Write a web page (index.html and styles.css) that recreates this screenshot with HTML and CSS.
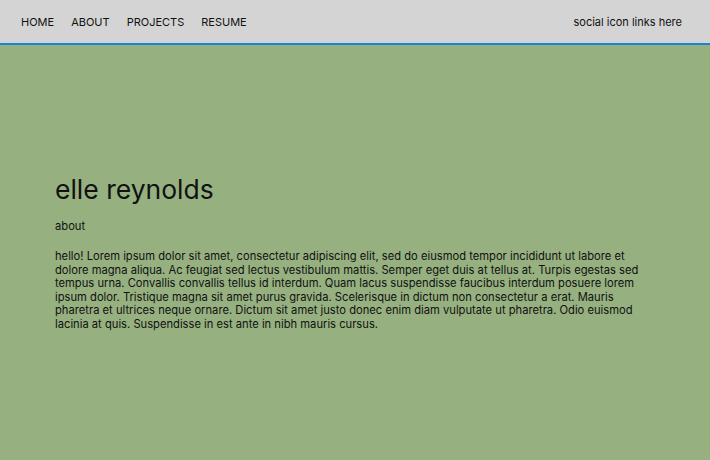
FILE: index.html
```html
<!DOCTYPE html>
<html lang="en">
<head>
<meta charset="utf-8">
<title>elle reynolds</title>
<link rel="stylesheet" href="styles.css">
</head>
<body>
<header class="nav">
  <nav class="nav-links">
    <a href="#" class="nav-link">HOME</a>
    <a href="#" class="nav-link">ABOUT</a>
    <a href="#" class="nav-link">PROJECTS</a>
    <a href="#" class="nav-link">RESUME</a>
  </nav>
  <div class="social">social icon links here</div>
</header>
<main class="content">
  <h1 class="title">elle reynolds</h1>
  <h2 class="subtitle">about</h2>
  <p class="text">hello! Lorem ipsum dolor sit amet, consectetur adipiscing elit, sed do eiusmod tempor incididunt ut labore et dolore magna aliqua. Ac feugiat sed lectus vestibulum mattis. Semper eget duis at tellus at. Turpis egestas sed tempus urna. Convallis convallis tellus id interdum. Quam lacus suspendisse faucibus interdum posuere lorem ipsum dolor. Tristique magna sit amet purus gravida. Scelerisque in dictum non consectetur a erat. Mauris pharetra et ultrices neque ornare. Dictum sit amet justo donec enim diam vulputate ut pharetra. Odio euismod lacinia at quis. Suspendisse in est ante in nibh mauris cursus.</p>
</main>
</body>
</html>
```

FILE: styles.css
```css
html, body {
  margin: 0;
  padding: 0;
  height: 100%;
}
body {
  background: #96b080;
  font-family: Inter, "Noto Sans", sans-serif;
  color: #111;
}
.nav {
  display: flex;
  justify-content: space-between;
  align-items: center;
  height: 43px;
  background: #d4d4d4;
  border-bottom: 2px solid #1a84d8;
  padding: 0 28px 0 21px;
  font-size: 11px;
}
.nav-links {
  display: flex;
  gap: 17px;
}
.nav-link {
  color: #111;
  text-decoration: none;
}
.social {
  color: #111;
}
.content {
  padding: 128px 55px 0 55px;
  max-width: 590px;
}
.title {
  margin: 0;
  font-size: 26.5px;
  font-weight: 400;
  line-height: 32px;
}
.subtitle {
  margin: 13px 0 0;
  font-size: 11.2px;
  font-weight: 400;
  line-height: 16px;
}
.text {
  margin: 16px 0 0;
  font-size: 11.2px;
  line-height: 13.6px;
}
```
